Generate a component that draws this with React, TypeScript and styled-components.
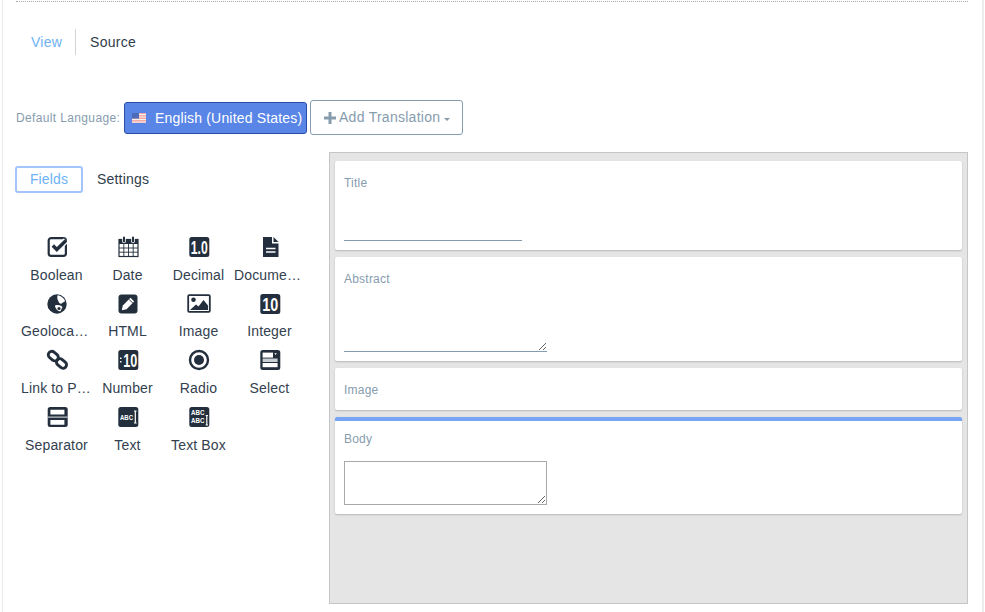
import React from "react";
import styled, { createGlobalStyle } from "styled-components";

const Global = createGlobalStyle`
  html, body { margin: 0; padding: 0; background: #fff; overflow: hidden; }
  body { font-family: "Liberation Sans", Arial, sans-serif; font-size: 14px; color: #2f3d4c; }
  * { box-sizing: border-box; }
`;

const Page = styled.div`
  margin-left: 2px;
  width: 982px;
  height: 612px;
  border-left: 1px solid #ececec;
  border-right: 2px solid #ececec;
  padding: 1px 14px 0 13px;
`;

const Rule = styled.div`
  border-top: 1px dotted #aaa;
  height: 1px;
`;

const NavBar = styled.nav`
  display: flex;
  align-items: center;
  height: 26px;
  margin-top: 27px;
`;

const NavItem = styled.a<{ $active?: boolean }>`
  display: flex;
  align-items: center;
  height: 26px;
  padding: 0 ${(p) => (p.$active ? "13px" : "15px")} 0 ${(p) => (p.$active ? "15px" : "14px")};
  font-size: 14px;
  letter-spacing: 0.25px;
  color: ${(p) => (p.$active ? "#6db3f5" : "#2f3d4c")};
  border-right: ${(p) => (p.$active ? "1px solid #d3d3d3" : "none")};
`;

const LangRow = styled.div`
  display: flex;
  align-items: center;
  margin-top: 45px;
  height: 35px;
`;

const LangLabel = styled.span`
  font-size: 12px;
  letter-spacing: 0.36px;
  color: #869cad;
  width: 108px;
  white-space: nowrap;
`;

const LangButton = styled.button`
  display: flex;
  align-items: center;
  width: 183px;
  height: 32px;
  margin-top: 1px;
  padding: 0 0 0 7px;
  border: 1px solid #2a4fa8;
  border-radius: 3px;
  background: #5885e6;
  color: #fff;
  font: 14px "Liberation Sans", Arial, sans-serif;
  letter-spacing: 0.18px;
  white-space: nowrap;
`;

const FlagIcon = styled.svg`
  width: 14px;
  height: 10px;
  margin-right: 9px;
  flex: none;
`;

const TranslationButton = styled.button`
  display: flex;
  align-items: center;
  width: 153px;
  height: 35px;
  margin-left: 3px;
  padding: 0 0 2px 13px;
  border: 1px solid #869cad;
  border-radius: 3px;
  background: #fff;
  color: #869cad;
  font: 14px "Liberation Sans", Arial, sans-serif;
  letter-spacing: 0.27px;
  white-space: nowrap;
`;

const PlusIcon = styled.svg`
  width: 12px;
  height: 12px;
  margin: 2px 3px 0 0;
  flex: none;
`;

const Caret = styled.span`
  width: 0;
  height: 0;
  margin: 5px 0 0 4px;
  border-left: 3px solid transparent;
  border-right: 3px solid transparent;
  border-top: 3px solid #869cad;
`;

const Workspace = styled.div`
  display: flex;
  margin-top: 17px;
`;

const Sidebar = styled.aside`
  width: 313px;
  flex: none;
  padding-top: 14px;
`;

const TabRow = styled.div`
  display: flex;
  align-items: center;
  height: 27px;
  margin-left: -1px;
`;

const Tab = styled.a<{ $active?: boolean }>`
  display: flex;
  align-items: center;
  justify-content: center;
  height: 27px;
  padding-bottom: 2px;
  font-size: 14px;
  letter-spacing: ${(p) => (p.$active ? "0.15px" : "0.2px")};
  width: ${(p) => (p.$active ? "68px" : "auto")};
  margin-left: ${(p) => (p.$active ? "0" : "14px")};
  color: ${(p) => (p.$active ? "#6db3f5" : "#2f3d4c")};
  border: ${(p) => (p.$active ? "2px solid #a3c5fb" : "none")};
  border-radius: 3px;
`;

const FieldGrid = styled.div`
  display: grid;
  grid-template-columns: repeat(4, 71px);
  grid-auto-rows: 56.67px;
  margin-top: 42px;
  margin-left: 5px;
`;

const Field = styled.div`
  display: flex;
  flex-direction: column;
  align-items: center;
  min-width: 0;
`;

const FieldIcon = styled.svg`
  width: 24px;
  height: 24px;
  display: block;
  flex: none;
`;

const FieldName = styled.span`
  width: 100%;
  margin-top: 7.6px;
  font-size: 14px;
  letter-spacing: 0.15px;
  line-height: 16px;
  color: #33414f;
  text-align: center;
  white-space: nowrap;
  overflow: hidden;
  text-overflow: ellipsis;
`;

const Canvas = styled.section`
  flex: 1;
  height: 452px;
  padding: 8px 5px;
  display: flex;
  flex-direction: column;
  gap: 7px;
  background: #e5e5e5;
  border: 1px solid #c6c6c6;
`;

const Card = styled.div<{ $h: number; $selected?: boolean }>`
  height: ${(p) => p.$h}px;
  padding: ${(p) => (p.$selected ? "10px" : "14px")} 9px 0;
  background: #fff;
  border-radius: 2px;
  border-top: ${(p) => (p.$selected ? "4px solid #77a5f6" : "none")};
  box-shadow: 0 1px 2px rgba(0, 0, 0, 0.2);
`;

const CardLabel = styled.div`
  font-size: 12px;
  letter-spacing: 0.22px;
  line-height: 15px;
  padding-top: 1px;
  color: #869cad;
`;

const LineInput = styled.input`
  display: block;
  width: 178px;
  height: 30px;
  margin-top: 20px;
  padding: 0;
  border: 0;
  border-bottom: 1px solid #869cad;
  background: transparent;
  outline: none;
`;

const LineArea = styled.textarea`
  display: block;
  width: 203px;
  height: 48px;
  margin-top: 17px;
  padding: 0;
  border: 0;
  border-bottom: 1px solid #869cad;
  background: transparent;
  outline: none;
`;

const BoxArea = styled.textarea`
  display: block;
  width: 203px;
  height: 44px;
  margin-top: 14px;
  padding: 0;
  border: 1px solid #a9a9a9;
  background: #fff;
  outline: none;
`;

const INK = "#232f3c";

const Badge = ({ children }: { children: React.ReactNode }) => (
  <>
    <rect x="2.300" y="2" width="20" height="20" rx="2.500" fill={INK} />
    {children}
  </>
);

const BadgeText = styled.text`
  font-family: "Liberation Sans", Arial, sans-serif;
  font-weight: 700;
  fill: #fff;
`;

const icons: Record<string, React.ReactNode> = {
  Boolean: (
    <>
      <rect x="3.700" y="3.100" width="17.200" height="17.800" rx="2.500" fill="none" stroke={INK} strokeWidth="2.200" />
      <path d="M7.800 10.500l4 4L21 5.500" fill="none" stroke="#fff" strokeWidth="6" />
      <path d="M7.800 10.500l4 4L21 5.500" fill="none" stroke={INK} strokeWidth="3.400" />
    </>
  ),
  Date: (
    <>
      <rect x="3" y="4.500" width="19" height="17" fill="#fff" stroke={INK} strokeWidth="1.200" />
      <path d="M3 4.500h19v4.500H3z" fill={INK} />
      <path d="M8 2.500v4M17 2.500v4" stroke="#fff" strokeWidth="3.600" strokeLinecap="round" />
      <path d="M8 2.500v4M17 2.500v4" stroke={INK} strokeWidth="2" strokeLinecap="round" />
      <path d="M7.800 9v12M12.500 9v12M17.200 9v12M3 13h19M3 17.200h19" stroke={INK} strokeWidth="0.900" />
    </>
  ),
  Decimal: (
    <Badge>
      <BadgeText x="12.300" y="19" fontSize="18" textAnchor="middle" textLength="17" lengthAdjust="spacingAndGlyphs">1.0</BadgeText>
    </Badge>
  ),
  "Documents and Media": (
    <>
      <path d="M5 2h9v6.500h6.500V22H5z" fill={INK} />
      <path d="M15.500 2l5 5h-5z" fill={INK} />
      <path d="M8 13.500h9.500M8 17h9.500" stroke="#fff" strokeWidth="1.600" />
    </>
  ),
  Geolocation: (
    <>
      <circle cx="12" cy="12" r="9.700" fill={INK} />
      <path d="M12.500 3.200c3 .3 6.200 2.300 7.700 5.800-1 1.500-2.700 1.300-3.400 2.600-1.500.5-3.300-.8-3.300-2.400-1.200-1.500-1.500-3.800-1-6zM10 13.500c3-1 6-.3 7.500 1.500l-2 4.300c-2.500.3-5.500-2.800-5.500-5.800z" fill="#fff" />
      <circle cx="14" cy="16.500" r="1.600" fill={INK} />
    </>
  ),
  HTML: (
    <>
      <rect x="2.500" y="2.500" width="19" height="19" rx="3" fill={INK} />
      <path d="M5.800 18.200l1-4.700 7.700-7.700 3.700 3.700-7.700 7.700z" fill="#fff" />
      <path d="M13 7.300l3.700 3.700" stroke={INK} strokeWidth="0.900" />
    </>
  ),
  Image: (
    <>
      <rect x="1.200" y="3.200" width="21.600" height="16.600" rx="1" fill="none" stroke={INK} strokeWidth="1.800" />
      <circle cx="6.500" cy="7.800" r="2.300" fill={INK} />
      <path d="M3 18l6-5.500 2.500 2 5-6.500 4.500 5.500V18z" fill={INK} />
    </>
  ),
  Integer: (
    <Badge>
      <BadgeText x="12.300" y="19" fontSize="18" textAnchor="middle" textLength="16" lengthAdjust="spacingAndGlyphs">10</BadgeText>
    </Badge>
  ),
  "Link to Page": (
    <g fill="none" stroke={INK} strokeWidth="2.900">
      <rect x="2.800" y="4.600" width="11" height="7" rx="3.500" transform="rotate(40 8.300 8.100)" />
      <rect x="11" y="12" width="11" height="7" rx="3.500" transform="rotate(40 16.500 15.500)" />
    </g>
  ),
  Number: (
    <Badge>
      <path d="M4 9.500h1.500V11H4zM4 13h1.500v1.500H4z" fill="#fff" />
      <BadgeText x="14.300" y="19" fontSize="18" textAnchor="middle" textLength="14" lengthAdjust="spacingAndGlyphs">10</BadgeText>
    </Badge>
  ),
  Radio: (
    <>
      <circle cx="12" cy="12" r="9" fill="none" stroke={INK} strokeWidth="2.400" />
      <circle cx="12" cy="12" r="5" fill={INK} />
    </>
  ),
  Select: (
    <Badge>
      <path d="M4.600 4.600h10.400v5H4.600z" fill="#fff" />
      <path d="M4.600 10.500h15v3.500h-15z" fill="#c9ced3" />
      <path d="M4.600 15h15v4.200h-15z" fill="#fff" />
      <path d="M16.300 5.300h2.600l-1.300 1.700z" fill="#fff" />
    </Badge>
  ),
  Separator: (
    <>
      <rect x="2.700" y="2" width="20" height="20" rx="2.500" fill={INK} />
      <path d="M5.400 4.700h14v4.700h-14zM5.400 15h14v4.700h-14z" fill="#fff" />
      <path d="M2.700 12.100h20" stroke="#e4e7ea" strokeWidth="1" />
    </>
  ),
  Text: (
    <Badge>
      <BadgeText x="4" y="15" fontSize="7" textLength="13" lengthAdjust="spacingAndGlyphs">ABC</BadgeText>
      <path d="M19.300 6v12M18 6h2.600M18 18h2.600" stroke="#fff" strokeWidth="1.200" />
    </Badge>
  ),
  "Text Box": (
    <Badge>
      <BadgeText x="4" y="9.500" fontSize="7" textLength="13.500" lengthAdjust="spacingAndGlyphs">ABC</BadgeText>
      <BadgeText x="4" y="17.500" fontSize="7" textLength="13.500" lengthAdjust="spacingAndGlyphs">ABC</BadgeText>
      <path d="M19.800 10.500v9.500M18.600 10.500h2.400M18.600 20h2.400" stroke="#fff" strokeWidth="1.200" />
    </Badge>
  ),
};

const fields = Object.keys(icons);

export default function App() {
  return (
    <>
      <Global />
      <Page>
        <Rule />
        <NavBar>
          <NavItem $active>View</NavItem>
          <NavItem>Source</NavItem>
        </NavBar>
        <LangRow>
          <LangLabel>Default Language:</LangLabel>
          <LangButton>
            <FlagIcon viewBox="0 0 14 10">
              <rect width="14" height="10" fill="#f3a9a4" />
              <path d="M0 1.500h14M0 4h14M0 6.500h14M0 9h14" stroke="#f4f1f1" strokeWidth="1.100" />
              <rect width="7" height="5.500" fill="#4e6cb8" />
            </FlagIcon>
            English (United States)
          </LangButton>
          <TranslationButton>
            <PlusIcon viewBox="0 0 12 12">
              <path d="M0 4.500h4.500V0h3v4.500H12v3H7.500V12h-3V7.500H0z" fill="#869cad" />
            </PlusIcon>
            Add Translation
            <Caret />
          </TranslationButton>
        </LangRow>
        <Workspace>
          <Sidebar>
            <TabRow>
              <Tab $active>Fields</Tab>
              <Tab>Settings</Tab>
            </TabRow>
            <FieldGrid>
              {fields.map((f) => (
                <Field key={f}>
                  <FieldIcon viewBox="0 0 24 24">{icons[f]}</FieldIcon>
                  <FieldName>{f}</FieldName>
                </Field>
              ))}
            </FieldGrid>
          </Sidebar>
          <Canvas>
            <Card $h={89}>
              <CardLabel>Title</CardLabel>
              <LineInput />
            </Card>
            <Card $h={104}>
              <CardLabel>Abstract</CardLabel>
              <LineArea />
            </Card>
            <Card $h={42}>
              <CardLabel>Image</CardLabel>
            </Card>
            <Card $h={97} $selected>
              <CardLabel>Body</CardLabel>
              <BoxArea />
            </Card>
          </Canvas>
        </Workspace>
      </Page>
    </>
  );
}
